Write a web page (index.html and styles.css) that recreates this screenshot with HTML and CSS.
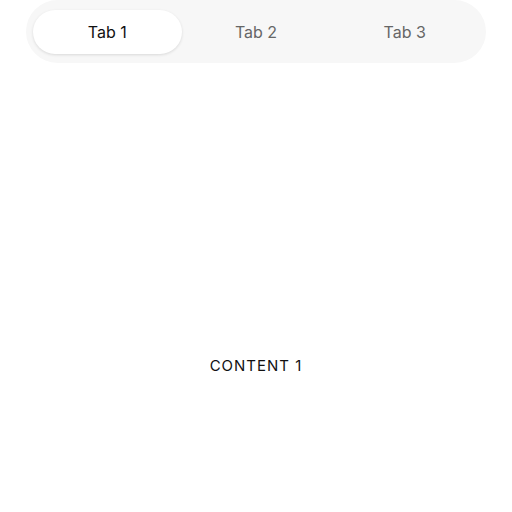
FILE: index.html
```html
<!DOCTYPE html>
<html>
<head>
<meta charset="utf-8">
<link rel="stylesheet" href="styles.css">
</head>
<body>
<div class="tabs">
  <div class="tab active">Tab 1</div>
  <div class="tab">Tab 2</div>
  <div class="tab">Tab 3</div>
</div>
<div class="content">CONTENT 1</div>
</body>
</html>
```
FILE: styles.css
```css
html, body { margin: 0; padding: 0; background: #fff; }
body { font-family: Inter, "Noto Sans", sans-serif; width: 512px; height: 512px; overflow: hidden; }
.tabs {
  margin: 0 26px;
  height: 63px;
  box-sizing: border-box;
  padding: 10px 7px 9px;
  background: #f7f7f7;
  border-radius: 32px;
  display: grid;
  grid-template-columns: 1fr 1fr 1fr;
}
.tab {
  display: flex; align-items: center; justify-content: center;
  font-size: 16px; color: #666; border-radius: 22px;
}
.tab.active {
  background: #fff; color: #111;
  box-shadow: 0 1px 3px rgba(0,0,0,0.12);
}
.content {
  text-align: center;
  margin-top: 293px;
  font-size: 15px;
  letter-spacing: 1px;
  color: #111;
}
```
